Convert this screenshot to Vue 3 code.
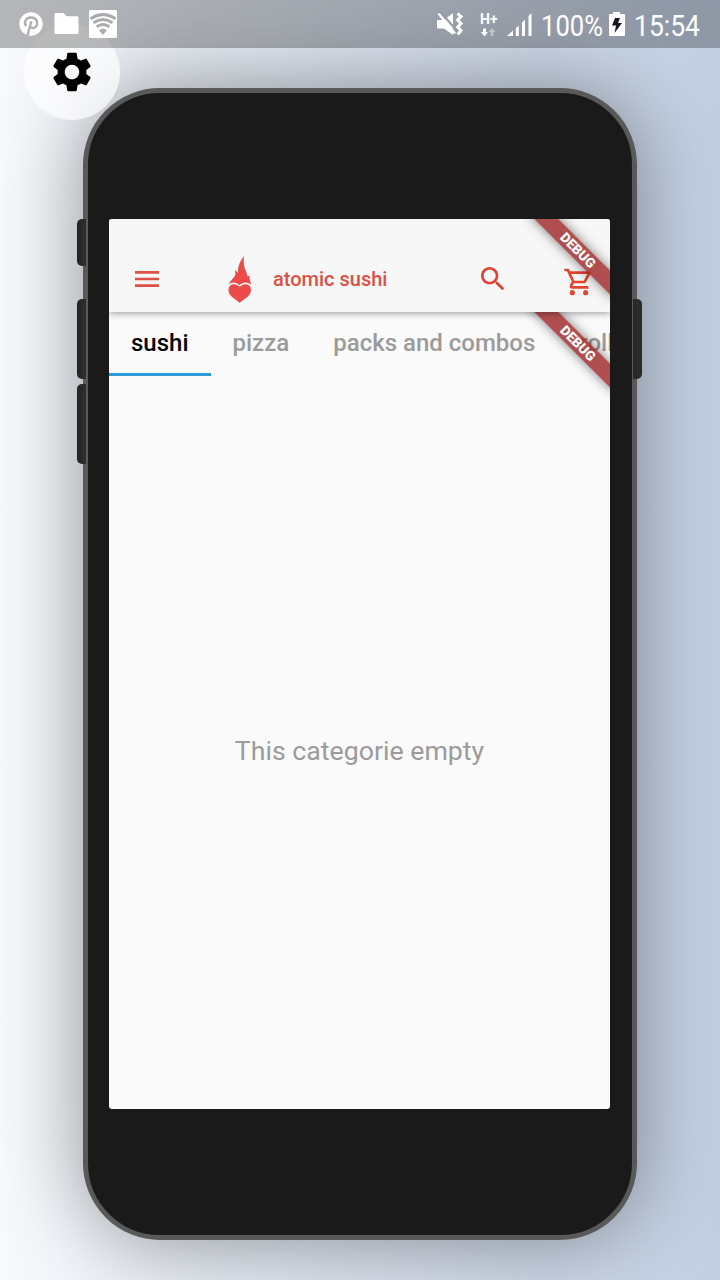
<script setup>
const tabs = ['sushi', 'pizza', 'packs and combos', 'rolls']
const sideButtons = ['mute', 'volume-up', 'volume-down', 'power']
</script>

<template>
  <div class="stage">
    <header class="status">
      <div class="notifications">
        <svg class="pin" width="24" height="24" viewBox="0 0 24 24">
          <circle cx="12" cy="12" r="11.7" fill="#fff" />
          <path d="M7.200 14.200C4.200 9.700 7.200 5.500 12.100 5.500c5 0 7.200 4 5.700 7.800-1.300 3.400-5 3.600-6.100 1.400M12.300 9.200 8.600 23" fill="none" stroke="#afafb0" stroke-width="2.400" />
        </svg>
        <svg width="25" height="22" viewBox="0 0 24 22"><path fill="#fff" d="M1.500 0H9l3 3.200h10.400c1 0 1.600.6 1.600 1.500v14.800c0 1-.6 1.500-1.600 1.500H1.500C.5 21 0 20.500 0 19.500v-18C0 .6.5 0 1.500 0z" /></svg>
        <svg width="28" height="28" viewBox="0 0 28 28">
          <rect width="28" height="28" rx="1.500" fill="#fff" />
          <g fill="none" stroke="#aaabae" stroke-width="3">
            <path d="M1.500 8.800Q14 .4 26.500 8.800" />
            <path d="M4.500 12.800Q14 6.200 23.500 12.800" />
            <path d="M7.600 16.800Q14 12.300 20.400 16.800" />
          </g>
          <path d="M10.100 20.200Q14 17.500 17.900 20.200L14 25z" fill="#aaabae" />
        </svg>
      </div>
      <svg class="system" width="270" height="48" viewBox="0 0 270 48">
        <g fill="#fff">
          <path d="M2 20h6l9-7v22l-9-6.500H2q-1 0-1-1v-6.500q0-1 1-1z" />
          <path d="M4 11.500l18 20.500" stroke="#979ba5" stroke-width="2.200" />
          <path d="M2.500 13.500l16.500 20" stroke="#fff" stroke-width="2.400" />
          <path d="M21.500 13.500l3.500 3-3.300 3.500 3.300 3.500-3.300 3.500 3.300 3.500-3.300 4" fill="none" stroke="#fff" stroke-width="3" />
          <text x="44" y="23.500" font-size="14" font-weight="700" textLength="17.500" lengthAdjust="spacingAndGlyphs">H+</text>
          <path d="M47 28.500h3V32h2L48.500 36.500 45 32h2z" />
          <path opacity=".4" d="M54.500 36v-4h-2L56 28l3.500 4h-2v4z" />
          <path d="M71 36l6-5.500V36zM79.800 28.300l3-2.800V36h-3zM86 22.500l3-2.800V36h-3zM92.500 16l3-3v23h-3z" />
          <text x="105" y="35.500" font-size="30" textLength="62" lengthAdjust="spacingAndGlyphs">100%</text>
          <path d="M173 14h4v-2h7v2h4q1 0 1 1v20q0 1-1 1h-14q-1 0-1-1V14z" />
          <path fill="#16181c" d="M179 18h5l-2 5h4l-7.500 10 1.500-7.500h-4z" />
          <text x="198" y="35.500" font-size="30" textLength="66" lengthAdjust="spacingAndGlyphs">15:54</text>
        </g>
      </svg>
    </header>

    <button class="settings" aria-label="settings">
      <svg width="46" height="46" viewBox="0 0 24 24"><path d="M19.430 12.980c.04-.32.07-.64.07-.98s-.03-.66-.07-.98l2.110-1.650c.19-.15.24-.42.12-.64l-2-3.460c-.12-.22-.39-.3-.61-.22l-2.490 1c-.52-.4-1.080-.73-1.690-.98l-.38-2.650C14.460 2.180 14.250 2 14 2h-4c-.25 0-.46.18-.49.42l-.38 2.650c-.61.25-1.170.59-1.690.98l-2.490-1c-.23-.09-.49 0-.61.22l-2 3.460c-.13.22-.07.49.12.64l2.110 1.650c-.04.32-.07.65-.07.98s.03.66.07.98l-2.110 1.650c-.19.15-.24.42-.12.64l2 3.460c.12.22.39.3.61.22l2.490-1c.52.4 1.080.73 1.690.98l.38 2.650c.03.24.24.42.49.42h4c.25 0 .46-.18.49-.42l.38-2.650c.61-.25 1.170-.59 1.690-.98l2.490 1c.23.09.49 0 .61-.22l2-3.460c.12-.22.07-.49-.12-.64l-2.110-1.650zM12 15.800c-2.100 0-3.800-1.700-3.800-3.800s1.700-3.800 3.800-3.800 3.800 1.700 3.800 3.800-1.700 3.800-3.800 3.800z" /></svg>
    </button>

    <div class="phone">
      <i v-for="b in sideButtons" :key="b" class="side" :class="b"></i>
      <main class="screen">
        <nav class="appbar">
          <svg class="menu" width="32" height="32" viewBox="0 0 24 24"><path d="M3 18h18v-2H3v2zm0-5h18v-2H3v2zm0-7v2h18V6H3z" /></svg>
          <svg class="logo" width="26" height="50" viewBox="0 0 26 50">
            <path d="M17 2C16 8 17 13.500 19.500 18.500c.5 1.500.8 2.500.9 4L22.300 21.500c-.2 3 1.200 5.500 1.900 9.500-3-3.600-8-3.300-11.700.2C9 28 5 27.500 2 30.700 3 26.500 7.500 24 8.300 20.500 8.600 19 8 17.500 8 16l3.200 3C10.500 12 13 7.500 17 2z" />
            <path d="M12.700 49C9 45 1.500 42.500 1.500 36c0-6.500 7-7.500 11.200-3.300C17 28.500 24 29.500 24 36c0 6.500-7.600 9-11.300 13z" />
          </svg>
          <h1>atomic sushi</h1>
          <svg class="search" width="32" height="32" viewBox="0 0 24 24"><path d="M15.500 14h-.79l-.28-.27C15.410 12.590 16 11.110 16 9.500 16 5.910 13.090 3 9.500 3S3 5.910 3 9.500 5.910 16 9.500 16c1.610 0 3.090-.59 4.230-1.570l.27.28v.79l5 4.990L20.490 19l-4.990-5zm-6 0C7.010 14 5 11.990 5 9.500S7.010 5 9.500 5 14 7.010 14 9.500 11.990 14 9.500 14z" /></svg>
          <svg class="cart" width="32" height="32" viewBox="0 0 24 24"><path d="M15.550 13c.75 0 1.410-.41 1.750-1.030l3.580-6.490c.37-.66-.11-1.480-.87-1.480H5.210l-.94-2H1v2h2l3.600 7.590-1.350 2.440C4.520 15.370 5.480 17 7 17h12v-2H7l1.100-2h7.450zM6.160 6h12.150l-2.760 5H8.530L6.160 6zM7 18c-1.100 0-1.990.9-1.990 2S5.900 22 7 22s2-.9 2-2-.9-2-2-2zm10 0c-1.100 0-1.990.9-1.990 2s.89 2 1.990 2 2-.9 2-2-.9-2-2-2z" /></svg>
          <span class="ribbon">DEBUG</span>
        </nav>
        <section class="content">
          <div class="tabs">
            <span v-for="(t, i) in tabs" :key="t" class="tab" :class="{ active: i === 0 }">{{ t }}</span>
          </div>
          <p class="empty">This categorie empty</p>
          <span class="ribbon">DEBUG</span>
        </section>
      </main>
    </div>
  </div>
</template>

<style>
html, body { margin: 0; }
</style>

<style scoped>
* { box-sizing: border-box; }
svg { display: block; flex: none; }
.stage {
  position: relative; width: 720px; height: 1280px; overflow: hidden;
  padding: 88px 83px 40px;
  background: linear-gradient(90deg, #f7f9fc, #c1cee2);
  font-family: Roboto, "Liberation Sans", sans-serif;
}
.status {
  position: absolute; z-index: 3; inset: 0 0 auto; height: 48px;
  display: flex; align-items: center; justify-content: space-between;
  padding: 0 14px 0 19px; background: rgba(0, 0, 0, .265);
}
.notifications { display: flex; align-items: center; gap: 10.500px; }
.system { font-family: Roboto, sans-serif; overflow: visible; }
.settings {
  position: absolute; z-index: 2; left: 24px; top: 24px; width: 96px; height: 96px;
  display: grid; place-items: center; padding: 0; border: 0; border-radius: 50%;
  background: rgba(255, 255, 255, .7);
}
.phone {
  position: relative; width: 554px; height: 1152px;
  padding: 126px 21px; border: 5px solid #595959; border-radius: 77px;
  background: #1a1a1a; box-shadow: 0 0 84px rgba(0, 0, 0, .4);
}
.side { position: absolute; left: -11px; width: 9px; height: 80px; border-radius: 5px 0 0 5px; background: linear-gradient(90deg, #222, #303030); }
.mute { top: 126px; height: 47px; }
.volume-up { top: 206px; }
.volume-down { top: 291px; }
.power { top: 206px; left: auto; right: -10px; border-radius: 0 5px 5px 0; background: #2a2a2a; }
.screen { width: 501px; height: 890px; border-radius: 3px; overflow: hidden; display: flex; flex-direction: column; background: #fafafa; }
.appbar {
  position: relative; z-index: 1; flex: none; height: 93px; display: flex; align-items: flex-start;
  padding: 43.500px 0 0 22px; background: #f7f7f7; fill: #dc5144; box-shadow: 0 2px 6px rgba(0, 0, 0, .32);
  clip-path: inset(0 0 -12px 0);
}
.logo { margin: -9px 0 0 64px; fill: #ed4b4b; }
h1 { margin: 4px 0 0 20px; width: 204px; font-size: 20px; line-height: 24px; font-weight: 500; color: #dc5144; white-space: nowrap; }
.search { fill: #df4338; }
.cart { fill: #e5432f; margin: 3px 0 0 53.500px; }
.content { position: relative; flex: 1; display: flex; flex-direction: column; overflow: hidden; }
.tabs { flex: none; display: flex; height: 64px; }
.tab { flex: none; padding: 0 22px; font-size: 24px; font-weight: 500; line-height: 63px; color: #9b9b9b; white-space: nowrap; }
.tab.active { color: #000; border-bottom: 3px solid #2d9ad8; }
.empty { margin: auto; padding-top: 17px; font-size: 26.700px; line-height: 32px; color: #9b9b9b; white-space: nowrap; }
.ribbon {
  position: absolute; right: -28px; top: 23px; width: 120px; height: 16.500px;
  transform: rotate(45deg); background: rgba(160, 40, 42, .82); box-shadow: 0 0 12px rgba(0, 0, 0, .5);
  color: #fff; font-size: 13.600px; line-height: 16.500px; font-weight: 900; text-align: center;
}
</style>
